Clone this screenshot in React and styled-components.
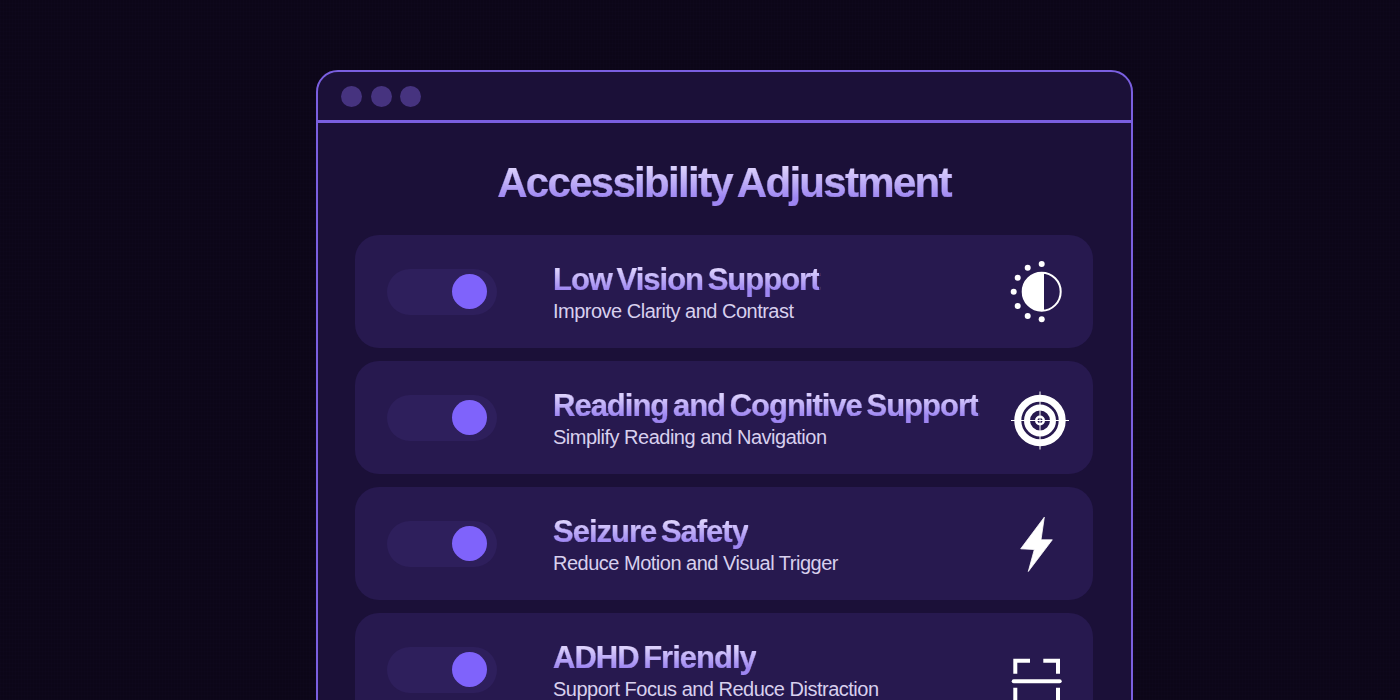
import styled, { createGlobalStyle } from 'styled-components'

const GlobalStyle = createGlobalStyle`
    html, body {
        margin: 0;
        padding: 0;
        height: 100%;
        overflow: hidden;
        background: #0c0618;
    }
`

const Page = styled.div`
    width: 1400px;
    height: 700px;
    overflow: hidden;
    box-sizing: border-box;
    padding: 70px 0 0 316px;
    font-family: "Liberation Sans", Arial, sans-serif;
    background-color: #0c0618;
    background-image:
        repeating-linear-gradient(90deg, rgba(120, 90, 200, 0.012) 0 1px, transparent 1px 3px),
        repeating-linear-gradient(0deg, rgba(120, 90, 200, 0.012) 0 1px, transparent 1px 4px);
`

const Window = styled.div`
    width: 817px;
    height: 760px;
    box-sizing: border-box;
    background: #1b1038;
    border: 2px solid #7a5fe0;
    border-radius: 22px 22px 0 0;
`

const TitleBar = styled.div`
    height: 51px;
    box-sizing: border-box;
    border-bottom: 3px solid #7a5fe0;
    display: flex;
    align-items: center;
    gap: 8.5px;
    padding-left: 23px;
`

const Dot = styled.span`
    width: 21px;
    height: 21px;
    border-radius: 50%;
    background: #46337f;
`

const Body = styled.div`
    padding: 35px 38px 0 37px;
    display: flex;
    flex-direction: column;
`

const Heading = styled.h1`
    margin: 0 0 27px;
    text-align: center;
    font-size: 42px;
    line-height: 50px;
    font-weight: 700;
    letter-spacing: -1.7px;
    word-spacing: -3.5px;
    color: transparent;
    background: linear-gradient(180deg, #dcd1fc 20%, #9d85f2 80%);
    background-clip: text;
    -webkit-background-clip: text;
    -webkit-text-stroke: 0.2px #b8a4f6;
`

const List = styled.div`
    display: flex;
    flex-direction: column;
    gap: 13px;
`

const Row = styled.div`
    height: 113px;
    box-sizing: border-box;
    background: #27194f;
    border-radius: 24px;
    padding: 0 30px 0 32px;
    display: flex;
    align-items: center;
`

const Toggle = styled.div`
    width: 110px;
    height: 46px;
    flex: none;
    box-sizing: border-box;
    border-radius: 23px;
    background: #2e1f5c;
    display: flex;
    align-items: center;
    justify-content: flex-end;
    padding-right: 10px;
    margin-right: 56px;
`

const Knob = styled.span`
    width: 35px;
    height: 35px;
    border-radius: 50%;
    background: #7f63fb;
`

const Texts = styled.div`
    flex: 1;
    display: flex;
    flex-direction: column;
    gap: 2px;
    padding-top: 2px;
`

const RowTitle = styled.div`
    font-size: 31px;
    line-height: 34px;
    font-weight: 700;
    letter-spacing: -1px;
    word-spacing: -3px;
    color: transparent;
    background: linear-gradient(180deg, #dcd1fc 20%, #9d85f2 80%);
    background-clip: text;
    -webkit-background-clip: text;
    -webkit-text-stroke: 0.2px #b8a4f6;
    width: fit-content;
`

const RowSub = styled.div`
    font-size: 20px;
    line-height: 24px;
    letter-spacing: -0.5px;
    color: #d8d0ee;
`

const IconBox = styled.div`
    width: 60px;
    height: 60px;
    flex: none;
    display: flex;
    align-items: center;
    justify-content: center;

    svg {
        overflow: visible;
    }
`

const ContrastIcon = () => (
    <svg width="60" height="60" viewBox="0 0 60 60">
        <circle cx="38.700" cy="29.700" r="19" fill="none" stroke="#fff" strokeWidth="2" />
        <path d="M41 10.600a19.200 19.200 0 1 0 0 38.200z" fill="#fff" />
        <g fill="#fff">
            <circle cx="10.700" cy="29.700" r="3" />
            <circle cx="14.700" cy="15.700" r="3" />
            <circle cx="14.700" cy="44" r="3" />
            <circle cx="24.700" cy="5.700" r="3" />
            <circle cx="24.700" cy="54" r="3" />
            <circle cx="38.700" cy="2" r="3" />
            <circle cx="38.700" cy="57.300" r="3" />
        </g>
    </svg>
)

const TargetIcon = () => (
    <svg width="60" height="60" viewBox="0 0 60 60">
        <g fill="none" stroke="#fff">
            <circle cx="37" cy="32.500" r="22.200" strokeWidth="7" />
            <circle cx="37" cy="32.500" r="13" strokeWidth="6" />
            <circle cx="37" cy="32.500" r="3.750" strokeWidth="2.500" />
            <path d="M37 3.500v58M8 32.500h58" strokeWidth="1" />
        </g>
    </svg>
)

const BoltIcon = () => (
    <svg width="60" height="60" viewBox="0 0 60 60">
        <path d="M41.300 3.200 17.700 34.800 31.300 35.500 25.300 57.500 49.300 25.800H38z" fill="#fff" stroke="#fff" strokeWidth="0.800" strokeLinejoin="round" />
    </svg>
)

const FocusIcon = () => (
    <svg width="60" height="60" viewBox="0 0 60 60">
        <g fill="none" stroke="#fff" strokeWidth="4">
            <path d="M12.300 33.800V20.800H27M40.300 20.800H55V33.800" />
            <path d="M10.700 41.200H56.700" strokeLinecap="round" />
            <path d="M12.300 47.800V62H27M40.300 62H55V47.800" />
        </g>
    </svg>
)

const rows = [
    { title: 'Low Vision Support', sub: 'Improve Clarity and Contrast', icon: <ContrastIcon /> },
    { title: 'Reading and Cognitive Support', sub: 'Simplify Reading and Navigation', icon: <TargetIcon /> },
    { title: 'Seizure Safety', sub: 'Reduce Motion and Visual Trigger', icon: <BoltIcon /> },
    { title: 'ADHD Friendly', sub: 'Support Focus and Reduce Distraction', icon: <FocusIcon /> }
]

export default function App() {
    return <Page>
        <GlobalStyle />
        <Window>
            <TitleBar>
                <Dot /><Dot /><Dot />
            </TitleBar>
            <Body>
                <Heading>Accessibility Adjustment</Heading>
                <List>
                    {rows.map(row => <Row key={row.title}>
                        <Toggle><Knob /></Toggle>
                        <Texts>
                            <RowTitle>{row.title}</RowTitle>
                            <RowSub>{row.sub}</RowSub>
                        </Texts>
                        <IconBox>{row.icon}</IconBox>
                    </Row>)}
                </List>
            </Body>
        </Window>
    </Page>
}
